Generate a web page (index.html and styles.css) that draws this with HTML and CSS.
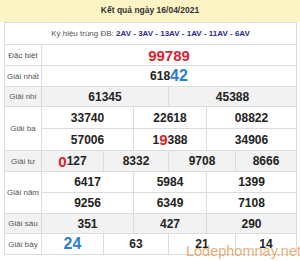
FILE: index.html
```html
<html>
<head>
    <meta charset="UTF-8">
    <title>Kết quả ngày 16/04/2021</title>
    <link rel="stylesheet" href="styles.css">
</head>
<body>
    <div class="title">Kết quả ngày 16/04/2021</div>
    <div class="board">
        <div class="code-row">Ký hiệu trúng ĐB: <b>2AV - 3AV - 13AV - 1AV - 11AV - 6AV</b></div>

        <div class="row">
            <div class="label">Đặc biệt</div>
            <div class="cells one">
                <div class="cell"><span class="special">99789</span></div>
            </div>
        </div>

        <div class="row">
            <div class="label">Giải nhất</div>
            <div class="cells one">
                <div class="cell">618<span class="blue">42</span></div>
            </div>
        </div>

        <div class="row alt short">
            <div class="label">Giải nhì</div>
            <div class="cells two">
                <div class="cell">61345</div>
                <div class="cell">45388</div>
            </div>
        </div>

        <div class="row tall">
            <div class="label">Giải ba</div>
            <div class="cells three">
                <div class="cell">33740</div>
                <div class="cell">22618</div>
                <div class="cell">08822</div>
                <div class="cell">57006</div>
                <div class="cell">1<span class="red">9</span>388</div>
                <div class="cell">34906</div>
            </div>
        </div>

        <div class="row alt">
            <div class="label">Giải tư</div>
            <div class="cells four">
                <div class="cell"><span class="red">0</span>127</div>
                <div class="cell">8332</div>
                <div class="cell">9708</div>
                <div class="cell">8666</div>
            </div>
        </div>

        <div class="row">
            <div class="label">Giải năm</div>
            <div class="cells three">
                <div class="cell">6417</div>
                <div class="cell">5984</div>
                <div class="cell">1399</div>
                <div class="cell">9256</div>
                <div class="cell">6349</div>
                <div class="cell">7108</div>
            </div>
        </div>

        <div class="row alt short">
            <div class="label">Giải sáu</div>
            <div class="cells three">
                <div class="cell">351</div>
                <div class="cell">427</div>
                <div class="cell">290</div>
            </div>
        </div>

        <div class="row">
            <div class="label">Giải bảy</div>
            <div class="cells four">
                <div class="cell"><span class="blue">24</span></div>
                <div class="cell">63</div>
                <div class="cell">21</div>
                <div class="cell">14</div>
            </div>
        </div>
    </div>

    <!-- site watermark over the last row -->
    <div class="watermark">Lodephomnay.net</div>
</body>
</html>
```

FILE: styles.css
```css
body {
    font-family: 'Liberation Sans', Arial, sans-serif;
    background-color: #fff;
    color: #222;
    margin: 0;
    padding: 0;
    width: 300px;
    height: 261px;
    position: relative;
    overflow: hidden;
}

.title {
    height: 22px;
    line-height: 21px;
    background-color: #fdf4c6;
    text-align: center;
    font-size: 8.5px;
    font-weight: bold;
    color: #333;
}

.board {
    margin-left: 4px;
    width: 293px;
    border: 1px solid #dcdcdc;
    border-bottom: none;
    box-sizing: border-box;
}

.code-row {
    height: 21px;
    line-height: 21px;
    text-align: center;
    font-size: 8px;
    color: #555;
    border-bottom: 1px solid #dcdcdc;
}

.code-row b {
    color: #2b2b8f;
}

.row {
    display: grid;
    grid-template-columns: 36px 1fr;
    gap: 1px;
    background-color: #dcdcdc;
    border-bottom: 1px solid #dcdcdc;
}

.label {
    display: flex;
    align-items: center;
    justify-content: center;
    background-color: #fff;
    font-size: 8px;
    color: #555;
}

.cells {
    display: grid;
    gap: 1px;
    background-color: #dcdcdc;
}

.cells.one {
    grid-template-columns: 1fr;
}

.cells.two {
    grid-template-columns: 126px 1fr;
}

.cells.three {
    grid-template-columns: 91px 72px 1fr;
}

.cells.four {
    grid-template-columns: 61px 64px 66px 1fr;
}

.cell {
    height: 20px;
    display: flex;
    align-items: center;
    justify-content: center;
    background-color: #fff;
    font-size: 12px;
    font-weight: bold;
    color: #222;
}

.row.short .cell {
    height: 19px;
}

.row.tall .cell {
    height: 21px;
}

.row.alt .label,
.row.alt .cell {
    background-color: #f2f2f2;
}

.special {
    font-size: 15px;
    color: #d9222c;
}

.red {
    font-size: 15px;
    color: #e0212d;
}

.blue {
    font-size: 16px;
    color: #2c7fd4;
}

.watermark {
    position: absolute;
    right: -1px;
    top: 243px;
    font-size: 14.5px;
    color: rgba(232, 150, 80, 0.8);
}
```
